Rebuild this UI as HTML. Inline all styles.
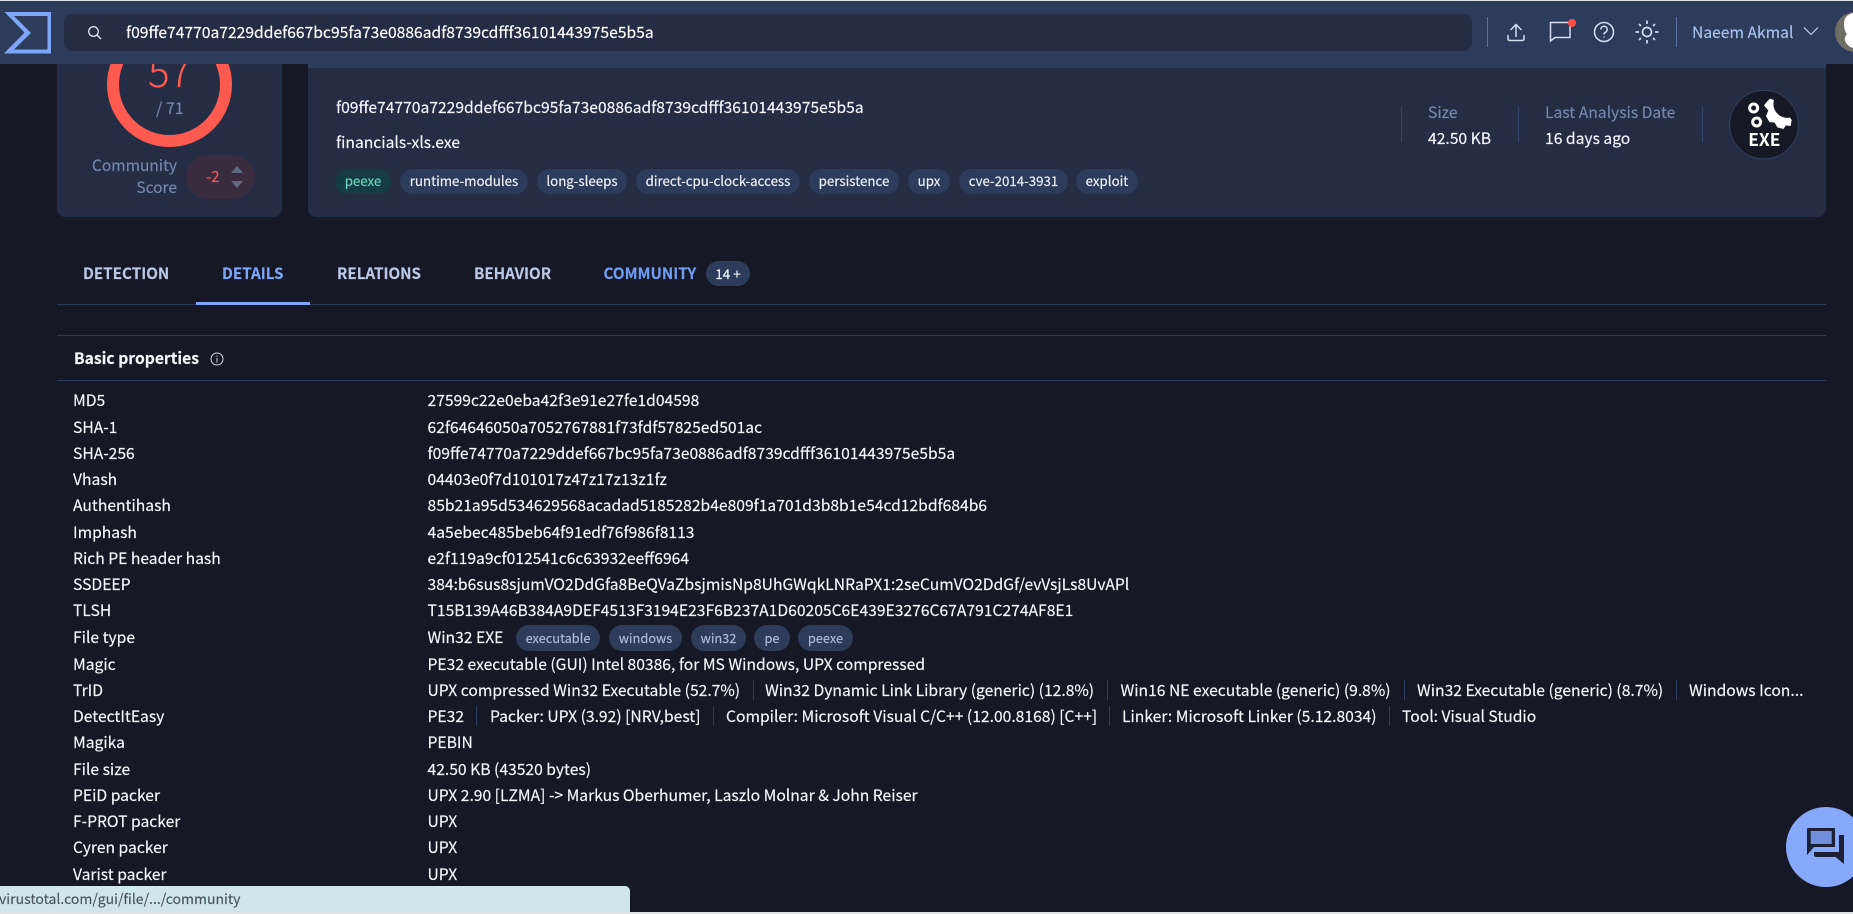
<!DOCTYPE html>
<html lang="en"><head><meta charset="utf-8"><title>VirusTotal</title>
<style>
html,body{margin:0;padding:0;width:1853px;height:914px;overflow:hidden;background:#171825}
body{position:relative;font-family:"Noto Sans CJK JP","Liberation Sans",sans-serif;color:#f4f7fc;font-size:15.67px;-webkit-text-stroke:.15px currentColor}
.a{position:absolute;white-space:nowrap}
.hdr{position:absolute;left:0;top:1px;width:1853px;height:63px;background:#2d3c5b;z-index:5}
.band{position:absolute;left:308px;top:60px;width:1518px;height:8px;background:#2d3c5b;z-index:4}
.card{position:absolute;background:#252d45;border-radius:0 0 8px 8px}
.chip{position:absolute;top:169px;height:25px;line-height:24px;border-radius:13px;background:#2d3c5b;text-align:center;font-size:13.3px;color:#eef2fa;white-space:nowrap}
.tab{position:absolute;top:261px;line-height:24px;font-size:15.2px;font-weight:700;color:#b9c8e6;white-space:nowrap}
.l{position:absolute;left:73px;line-height:26px;white-space:nowrap}
.v{position:absolute;left:427.5px;line-height:26px;white-space:nowrap}
.s{position:absolute;width:1px;height:20px;background:#2f3d5c}
.f{position:absolute;top:625px;height:26px;line-height:26px;border-radius:13px;background:#2d3c5b;text-align:center;font-size:12.8px;color:#aebcd8}
.rule{position:absolute;left:57px;width:1769px;height:1px;background:#2f3d5c}
</style></head><body>
<div class="a" style="left:0;top:0;width:1853px;height:1px;background:#dfe3ea;z-index:6"></div>

<div class="card" style="left:57px;top:0;width:225px;height:217px"></div>
<svg class="a" style="left:100px;top:15px" width="140" height="140"><circle cx="69.5" cy="69.5" r="56.5" fill="none" stroke="#ff5a4f" stroke-width="12"/></svg>
<div class="a" style="left:57px;width:225px;top:45px;line-height:50px;text-align:center;font-size:40px;font-weight:300;color:#ff5a4f">57</div>
<div class="a" style="left:156px;top:96px;line-height:22px;font-size:16px;color:#7488ad">/ 71</div>
<div class="a" style="left:57px;width:120px;top:154px;line-height:22px;text-align:right;font-size:15.5px;color:#7488ad;white-space:normal">Community<br>Score</div>
<div class="a" style="left:186px;top:155px;width:69px;height:44px;border-radius:22px;background:#3a2c3f"></div>
<div class="a" style="left:206px;top:166px;line-height:22px;font-size:15px;color:#ff4f4f">-2</div>
<svg class="a" style="left:230px;top:165px" width="14" height="24"><path d="M1 8 L7 1 L13 8Z M1 16 L13 16 L7 23Z" fill="#5f6a80"/></svg>

<div class="band"></div>
<div class="card" style="left:308px;top:64px;width:1518px;height:153px"></div>
<div class="a" style="left:336px;top:94px;line-height:26px">f09ffe74770a7229ddef667bc95fa73e0886adf8739cdfff36101443975e5b5a</div>
<div class="a" style="left:336px;top:129px;line-height:26px">financials-xls.exe</div>
<div class="chip" style="left:335px;width:56px;background:#153c44;color:#64d6bb">peexe</div>
<div class="chip" style="left:400px;width:128px">runtime-modules</div>
<div class="chip" style="left:537px;width:90px">long-sleeps</div>
<div class="chip" style="left:636px;width:164px">direct-cpu-clock-access</div>
<div class="chip" style="left:809px;width:90px">persistence</div>
<div class="chip" style="left:908px;width:42px">upx</div>
<div class="chip" style="left:959px;width:109px">cve-2014-3931</div>
<div class="chip" style="left:1076px;width:62px">exploit</div>

<div class="a" style="left:1401px;top:107px;width:1px;height:35px;background:#37466a"></div>
<div class="a" style="left:1518px;top:107px;width:1px;height:35px;background:#37466a"></div>
<div class="a" style="left:1702px;top:107px;width:1px;height:35px;background:#37466a"></div>
<div class="a" style="left:1428px;top:100px;line-height:24px;color:#7488ad">Size</div>
<div class="a" style="left:1428px;top:126px;line-height:24px">42.50 KB</div>
<div class="a" style="left:1545px;top:100px;line-height:24px;color:#7488ad">Last Analysis Date</div>
<div class="a" style="left:1545px;top:126px;line-height:24px">16 days ago</div>

<svg class="a" style="left:1700px;top:80px" width="130" height="100" viewBox="0 0 390 300">
<circle cx="192" cy="134" r="103" fill="#171825" stroke="#33415f" stroke-width="3"/>
<path d="M192 76 L200 66 L210 56 L222 60 A42 42 0 0 0 270 113 L275 120 L272 138 L258 136 L250 147 L232 142 L224 128 L208 126 L198 108 L205 92Z" fill="#fff"/>
<circle cx="161" cy="84" r="12" fill="none" stroke="#fff" stroke-width="9"/>
<circle cx="170" cy="126" r="12" fill="none" stroke="#fff" stroke-width="9"/>
<text x="193" y="198" text-anchor="middle" font-family="Noto Sans CJK JP, sans-serif" font-weight="700" font-size="52" fill="#fff" style="-webkit-text-stroke:0">EXE</text>
</svg>

<div class="hdr"></div>
<svg class="a" style="left:0;top:0;z-index:6" width="60" height="64"><path fill-rule="evenodd" d="M4.5 12 H51 V53.5 H4 L24.5 32.5Z M14 16 L31 33 L14 49.5 H47.5 V16Z" fill="#7ea6f8"/></svg>
<div class="a" style="left:64px;top:14px;width:1408px;height:37px;border-radius:8px;background:#252d45;z-index:6"></div>
<svg class="a" style="left:86px;top:24px;z-index:7" width="18" height="18"><circle cx="7.5" cy="7.5" r="4.8" fill="none" stroke="#dde3ef" stroke-width="1.3"/><path d="M11 11 L15 15" stroke="#dde3ef" stroke-width="1.5"/></svg>
<div class="a" style="left:126px;top:19px;line-height:26px;z-index:7;color:#fff">f09ffe74770a7229ddef667bc95fa73e0886adf8739cdfff36101443975e5b5a</div>

<div class="a" style="left:1487px;top:17px;width:1px;height:30px;background:#5a74a6;z-index:7"></div>
<div class="a" style="left:1676px;top:17px;width:1px;height:30px;background:#5a74a6;z-index:7"></div>
<svg class="a" style="left:1500px;top:14px;z-index:7" width="170" height="36" fill="none" stroke="#d5def0" stroke-width="1.5">
<path d="M16 23 V11 M10.5 16 L16 10.5 L21.5 16 M8 21 V25 Q8 26.5 10.5 26.5 H21.5 Q24 26.5 24 25 V21"/>
<path d="M50.5 8.5 H70 V23.5 H55 L50.5 27Z"/>
<circle cx="104" cy="18" r="9.5"/>
<path d="M100.8 15.5 A3.2 3.2 0 1 1 105.2 18.4 Q104 19 104 20.5 M104 22.5 V23.5"/>
<circle cx="147" cy="18" r="4.5" stroke-width="1.7"/>
<path d="M147 6.5 V10 M147 26 V29.5 M135.5 18 H139 M155 18 H158.5 M139 10 L141 12 M153 24 L155 26 M139 26 L141 24 M153 12 L155 10" stroke-width="1.7"/>
</svg>
<div class="a" style="left:1568px;top:19px;width:8px;height:8px;border-radius:50%;background:#ff4d45;z-index:8"></div>
<div class="a" style="left:1692px;top:19px;line-height:26px;color:#a9c2ee;z-index:7">Naeem Akmal</div>
<svg class="a" style="left:1803px;top:26px;z-index:7" width="16" height="11"><path d="M1 1.5 L8 8.5 L15 1.5" fill="none" stroke="#cfd9ec" stroke-width="1.1"/></svg>
<svg class="a" style="left:1835px;top:12px;z-index:7" width="18" height="40"><circle cx="20" cy="20" r="20" fill="#6f6e66"/><path d="M18 1 Q9 3 9 12 Q9 19 12 22 Q9 25 10 29 Q13 35 18 36Z" fill="#fff"/></svg>

<div class="tab" style="left:83px">DETECTION</div>
<div class="tab" style="left:222px;color:#7ea6f8">DETAILS</div>
<div class="tab" style="left:337px">RELATIONS</div>
<div class="tab" style="left:474px">BEHAVIOR</div>
<div class="tab" style="left:603.5px;color:#6f9cf3">COMMUNITY</div>
<div class="a" style="left:706px;top:261px;width:44px;height:25px;line-height:24px;border-radius:13px;background:#2d3c5b;text-align:center;font-size:13.5px">14 +</div>
<div class="rule" style="top:304px"></div>
<div class="a" style="left:196px;top:302px;width:114px;height:3px;background:#7ea6f8"></div>
<div class="rule" style="top:335px"></div>
<div class="a" style="left:74px;top:345px;line-height:26px;font-weight:700">Basic properties</div>
<svg class="a" style="left:210px;top:352px" width="14" height="14" fill="none" stroke="#cfd6e4"><circle cx="7" cy="7" r="6"/><path d="M7 6 V10.5 M7 3.5 V4.7"/></svg>
<div class="rule" style="top:380px"></div>

<div class="l" style="top:387px">MD5</div><div class="v" style="top:387px">27599c22e0eba42f3e91e27fe1d04598</div>
<div class="l" style="top:414px">SHA-1</div><div class="v" style="top:414px">62f64646050a7052767881f73fdf57825ed501ac</div>
<div class="l" style="top:440px">SHA-256</div><div class="v" style="top:440px">f09ffe74770a7229ddef667bc95fa73e0886adf8739cdfff36101443975e5b5a</div>
<div class="l" style="top:466px">Vhash</div><div class="v" style="top:466px">04403e0f7d101017z47z17z13z1fz</div>
<div class="l" style="top:492px">Authentihash</div><div class="v" style="top:492px">85b21a95d534629568acadad5185282b4e809f1a701d3b8b1e54cd12bdf684b6</div>
<div class="l" style="top:519px">Imphash</div><div class="v" style="top:519px">4a5ebec485beb64f91edf76f986f8113</div>
<div class="l" style="top:545px">Rich PE header hash</div><div class="v" style="top:545px">e2f119a9cf012541c6c63932eeff6964</div>
<div class="l" style="top:571px">SSDEEP</div><div class="v" style="top:571px">384:b6sus8sjumVO2DdGfa8BeQVaZbsjmisNp8UhGWqkLNRaPX1:2seCumVO2DdGf/evVsjLs8UvAPl</div>
<div class="l" style="top:597px">TLSH</div><div class="v" style="top:597px">T15B139A46B384A9DEF4513F3194E23F6B237A1D60205C6E439E3276C67A791C274AF8E1</div>
<div class="l" style="top:624px">File type</div><div class="v" style="top:624px">Win32 EXE</div>
<div class="f" style="left:516px;width:84px">executable</div>
<div class="f" style="left:609px;width:73px">windows</div>
<div class="f" style="left:691px;width:55px">win32</div>
<div class="f" style="left:754px;width:36px">pe</div>
<div class="f" style="left:798px;width:55px">peexe</div>
<div class="l" style="top:651px">Magic</div><div class="v" style="top:651px">PE32 executable (GUI) Intel 80386, for MS Windows, UPX compressed</div>

<div class="l" style="top:677px">TrID</div>
<div class="v" style="top:677px">UPX compressed Win32 Executable (52.7%)</div>
<div class="s" style="left:753px;top:680px"></div>
<div class="v" style="top:677px;left:765px">Win32 Dynamic Link Library (generic) (12.8%)</div>
<div class="s" style="left:1107px;top:680px"></div>
<div class="v" style="top:677px;left:1120.5px">Win16 NE executable (generic) (9.8%)</div>
<div class="s" style="left:1404px;top:680px"></div>
<div class="v" style="top:677px;left:1417px">Win32 Executable (generic) (8.7%)</div>
<div class="s" style="left:1676px;top:680px"></div>
<div class="v" style="top:677px;left:1689px">Windows Icon...</div>

<div class="l" style="top:703px">DetectItEasy</div>
<div class="v" style="top:703px">PE32</div>
<div class="s" style="left:476px;top:706px"></div>
<div class="v" style="top:703px;left:490px">Packer: UPX (3.92) [NRV,best]</div>
<div class="s" style="left:713px;top:706px"></div>
<div class="v" style="top:703px;left:726px">Compiler: Microsoft Visual C/C++ (12.00.8168) [C++]</div>
<div class="s" style="left:1109px;top:706px"></div>
<div class="v" style="top:703px;left:1122px">Linker: Microsoft Linker (5.12.8034)</div>
<div class="s" style="left:1389px;top:706px"></div>
<div class="v" style="top:703px;left:1402px">Tool: Visual Studio</div>

<div class="l" style="top:729px">Magika</div><div class="v" style="top:729px">PEBIN</div>
<div class="l" style="top:756px">File size</div><div class="v" style="top:756px">42.50 KB (43520 bytes)</div>
<div class="l" style="top:782px">PEiD packer</div><div class="v" style="top:782px">UPX 2.90 [LZMA] -&gt; Markus Oberhumer, Laszlo Molnar &amp; John Reiser</div>
<div class="l" style="top:808px">F-PROT packer</div><div class="v" style="top:808px">UPX</div>
<div class="l" style="top:834px">Cyren packer</div><div class="v" style="top:834px">UPX</div>
<div class="l" style="top:861px">Varist packer</div><div class="v" style="top:861px">UPX</div>

<div class="a" style="left:0;top:886px;width:630px;height:26px;background:#cfe6ec;border-radius:0 5px 0 0;z-index:8"></div>
<div class="a" style="left:-1px;top:887px;line-height:24px;font-size:14px;color:#4a5560;z-index:9">virustotal.com/gui/file/.../community</div>
<div class="a" style="left:0;top:912px;width:1853px;height:2px;background:#dfe1e4;z-index:9"></div>

<svg class="a" style="left:1786px;top:807px;z-index:8" width="67" height="80">
<circle cx="40" cy="40" r="40" fill="#86a9fb"/>
<path d="M21 22 Q21 21 22 21 H48 Q49 21 49 22 V40 H28 L21 48Z" fill="#1c2138"/>
<rect x="24.7" y="24" width="21" height="13" fill="#6f8fdc"/>
<path d="M53 28 H58 V57 L49.5 50 H30 Q28 50 28 48 V45 H53Z" fill="#1c2138"/>
</svg>
</body></html>
